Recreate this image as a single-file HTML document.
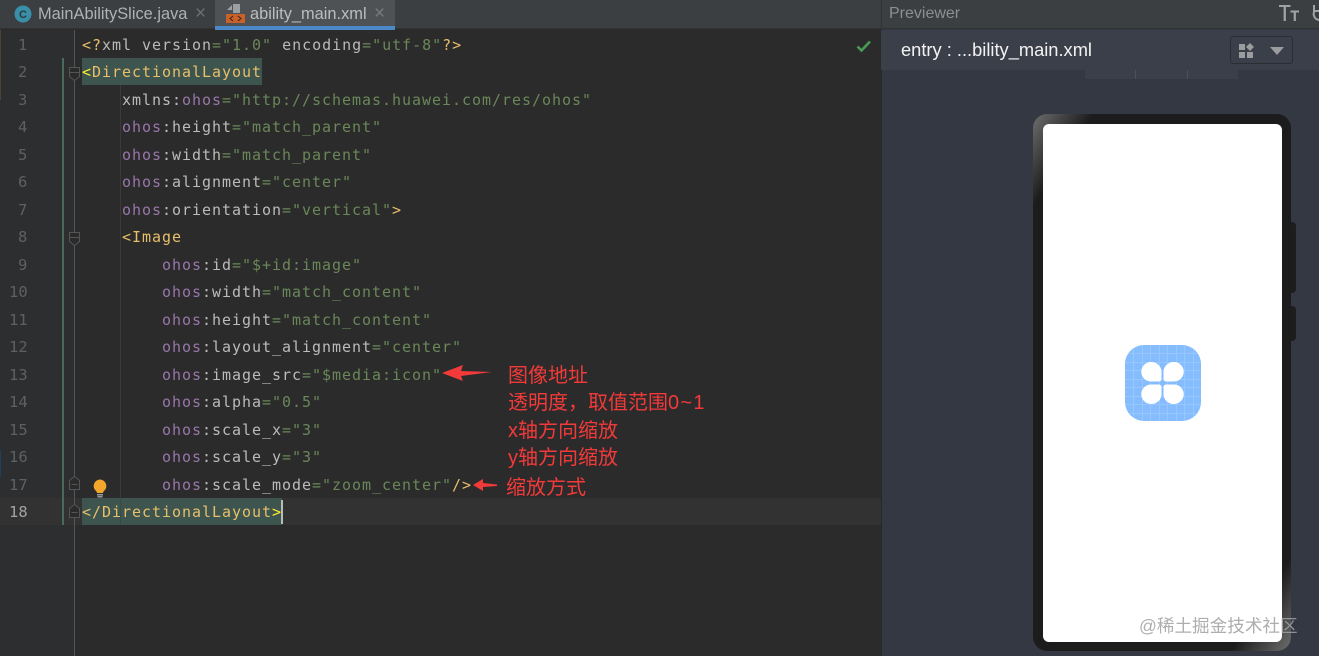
<!DOCTYPE html>
<html><head><meta charset="utf-8">
<style>
*{box-sizing:border-box}
html,body{margin:0;padding:0;width:1319px;height:656px;overflow:hidden;background:#2b2b2b}
body{position:relative;font-family:"Liberation Sans",sans-serif}
.a{position:absolute}
.ln{position:absolute;font:15.5px/27px "DejaVu Sans Mono",monospace;color:#5d6163;white-space:pre}
.c{position:absolute;margin-top:1px;font:15px/27px "DejaVu Sans Mono","Liberation Mono",monospace;letter-spacing:.97px;white-space:pre;color:#bbb}
.o{color:#9876aa}.s{color:#6a8759}.t{color:#e8bf6a}.y{color:#ffef28}.g{color:#a9b7c6}
.r{position:absolute;margin-top:2px;font:20px/27px "Liberation Sans","Noto Sans CJK SC",sans-serif;color:#f23a3a;white-space:pre}
</style></head><body>
<!-- tab bar -->
<div class="a" style="left:0;top:0;width:881px;height:29px;background:#3c3f41;border-bottom:1px solid #323232"></div>
<div class="a" style="left:215px;top:0;width:180px;height:26px;background:#4e5254"></div>
<div class="a" style="left:215px;top:26px;width:180px;height:4px;background:#4a88c7"></div>
<svg class="a" style="left:14px;top:5px" width="18" height="18"><circle cx="9" cy="9" r="8.5" fill="#3a8fa8"/><text x="9" y="13" text-anchor="middle" font-family="Liberation Sans" font-weight="bold" font-size="11" fill="#2b3a40">C</text></svg>
<div class="a" style="left:38px;top:3px;font-size:16.4px;line-height:22px;color:#afb1b3;white-space:pre">MainAbilitySlice.java</div>
<div class="a" style="left:195px;top:3px;font-size:19px;line-height:22px;color:#6d7072">×</div>
<svg class="a" style="left:226px;top:3px" width="20" height="21"><path d="M7 1h7v9H7z" fill="#9da0a2"/><path d="M1 7l5-5v5z" fill="#9da0a2"/><rect x="0" y="11" width="19" height="9" fill="#c9602a"/><path d="M7 13l-3 2.5 3 2.5M12 13l3 2.5-3 2.5" stroke="#3b2416" stroke-width="1" fill="none"/></svg>
<div class="a" style="left:250px;top:3px;font-size:16.4px;line-height:22px;color:#bbbdbf;white-space:pre">ability_main.xml</div>
<div class="a" style="left:374px;top:3px;font-size:19px;line-height:22px;color:#787b7d">×</div>

<!-- gutter -->
<div class="a" style="left:0;top:30px;width:75px;height:626px;background:#2d2e2f"></div>
<div class="a" style="left:0;top:498px;width:75px;height:27px;background:#323232"></div>
<div class="a" style="left:74px;top:30px;width:1px;height:626px;background:#555"></div>
<div class="a" style="left:62px;top:58px;width:2px;height:467px;background:#4a6a5c"></div>
<div class="a" style="left:0;top:30px;width:1px;height:70px;background:#4a4336"></div>
<div class="a" style="left:0;top:450px;width:1px;height:27px;background:#1f3f5f"></div>
<div class="a" style="left:75px;top:498px;width:806px;height:27px;background:#323232"></div>
<div class="a" style="left:120px;top:85px;width:1px;height:413px;background:#3a3a3a"></div>

<div class="ln" style="top:32px;left:18px">1</div>
<div class="ln" style="top:59px;left:18px">2</div>
<div class="ln" style="top:87px;left:18px">3</div>
<div class="ln" style="top:114px;left:18px">4</div>
<div class="ln" style="top:142px;left:18px">5</div>
<div class="ln" style="top:169px;left:18px">6</div>
<div class="ln" style="top:197px;left:18px">7</div>
<div class="ln" style="top:224px;left:18px">8</div>
<div class="ln" style="top:252px;left:18px">9</div>
<div class="ln" style="top:279px;left:9px">10</div>
<div class="ln" style="top:307px;left:9px">11</div>
<div class="ln" style="top:334px;left:9px">12</div>
<div class="ln" style="top:362px;left:9px">13</div>
<div class="ln" style="top:389px;left:9px">14</div>
<div class="ln" style="top:417px;left:9px">15</div>
<div class="ln" style="top:444px;left:9px">16</div>
<div class="ln" style="top:472px;left:9px">17</div>
<div class="ln" style="top:499px;left:9px;color:#a4a3a3">18</div>

<!-- highlights -->
<div class="a" style="left:82px;top:58px;width:180px;height:27px;background:#3d544f"></div>
<div class="a" style="left:82px;top:498px;width:200px;height:27px;background:#3d544f"></div>
<div class="a" style="left:120px;top:498px;width:1px;height:27px;background:#3a4a46"></div>

<!-- fold markers -->
<svg class="a" style="left:68px;top:66px" width="14" height="16"><path d="M1.500 1.500h10v9l-5 4-5-4z" fill="#2b2b2b" stroke="#555"/><path d="M1.500 6.500h10" stroke="#555"/></svg>
<svg class="a" style="left:68px;top:231px" width="14" height="16"><path d="M1.500 1.500h10v9l-5 4-5-4z" fill="#2b2b2b" stroke="#555"/><path d="M1.500 6.500h10" stroke="#555"/></svg>
<svg class="a" style="left:68px;top:475px" width="14" height="16"><path d="M1.500 14.500h10v-9l-5-4-5 4z" fill="#2b2b2b" stroke="#555"/><path d="M3.500 9.500h6" stroke="#555"/></svg>
<svg class="a" style="left:68px;top:503px" width="14" height="16"><path d="M1.500 14.500h10v-9l-5-4-5 4z" fill="#2b2b2b" stroke="#555"/><path d="M3.500 9.500h6" stroke="#555"/></svg>
<svg class="a" style="left:92px;top:479px" width="16" height="19"><path d="M8 0.500a6.500 6.500 0 0 1 4 11.500c-.8.700-1 1.500-1 2H5c0-.5-.2-1.300-1-2A6.500 6.500 0 0 1 8 .5z" fill="#f2a62b"/><rect x="5" y="15" width="6" height="1.500" fill="#9a9a9a"/><rect x="5.500" y="17" width="5" height="1.500" fill="#9a9a9a"/></svg>

<!-- code -->
<div class="c" style="left:82px;top:31px"><span class="t">&lt;?</span><span style="color:#bababa">xml version</span><span class="s">="1.0"</span> <span style="color:#bababa">encoding</span><span class="s">="utf-8"</span><span class="t">?&gt;</span></div>
<div class="c t" style="left:82px;top:58px"><span class="y">&lt;</span>DirectionalLayout</div>
<div class="c" style="left:122px;top:86px">xmlns:<span class="o">ohos</span><span class="s">="http://schemas.huawei.com/res/ohos"</span></div>
<div class="c" style="left:122px;top:113px"><span class="o">ohos</span>:height<span class="s">="match_parent"</span></div>
<div class="c" style="left:122px;top:141px"><span class="o">ohos</span>:width<span class="s">="match_parent"</span></div>
<div class="c" style="left:122px;top:168px"><span class="o">ohos</span>:alignment<span class="s">="center"</span></div>
<div class="c" style="left:122px;top:196px"><span class="o">ohos</span>:orientation<span class="s">="vertical"</span><span class="t">&gt;</span></div>
<div class="c t" style="left:122px;top:223px">&lt;Image</div>
<div class="c" style="left:162px;top:251px"><span class="o">ohos</span>:id<span class="s">="$+id:image"</span></div>
<div class="c" style="left:162px;top:278px"><span class="o">ohos</span>:width<span class="s">="match_content"</span></div>
<div class="c" style="left:162px;top:306px"><span class="o">ohos</span>:height<span class="s">="match_content"</span></div>
<div class="c" style="left:162px;top:333px"><span class="o">ohos</span>:layout_alignment<span class="s">="center"</span></div>
<div class="c" style="left:162px;top:361px"><span class="o">ohos</span>:image_src<span class="s">="$media:icon"</span></div>
<div class="c" style="left:162px;top:388px"><span class="o">ohos</span>:alpha<span class="s">="0.5"</span></div>
<div class="c" style="left:162px;top:416px"><span class="o">ohos</span>:scale_x<span class="s">="3"</span></div>
<div class="c" style="left:162px;top:443px"><span class="o">ohos</span>:scale_y<span class="s">="3"</span></div>
<div class="c" style="left:162px;top:471px"><span class="o">ohos</span>:scale_mode<span class="s">="zoom_center"</span><span class="t">/&gt;</span></div>
<div class="c t" style="left:82px;top:498px">&lt;/DirectionalLayout<span class="y">&gt;</span></div>
<div class="a" style="left:281px;top:500px;width:2px;height:24px;background:#bbb"></div>

<!-- check -->
<svg class="a" style="left:856px;top:40px" width="16" height="13"><path d="M1.500 6.500l4 4 8.500-9" fill="none" stroke="#499c54" stroke-width="2.600"/></svg>

<!-- annotations -->
<svg class="a" style="left:441px;top:362px" width="52" height="20"><path d="M1 11L22 3l-2 6 31 1-31 4 2 5z" fill="#f23a3a"/></svg>
<svg class="a" style="left:472px;top:477px" width="26" height="16"><path d="M1 8L11 2v4l14 1.500V9l-14 1v4z" fill="#f23a3a"/></svg>
<div class="r" style="left:508px;top:361px">图像地址</div>
<div class="r" style="left:508px;top:388px">透明度，取值范围<span style="letter-spacing:1.300px">0~1</span></div>
<div class="r" style="left:508px;top:416px">x轴方向缩放</div>
<div class="r" style="left:508px;top:443px">y轴方向缩放</div>
<div class="r" style="left:506px;top:473px">缩放方式</div>

<!-- previewer -->
<div class="a" style="left:881px;top:0;width:438px;height:656px;background:#333842;border-left:1px solid #26282a"></div>
<div class="a" style="left:881px;top:0;width:438px;height:29px;background:#3c3f41;border-left:1px solid #323232;border-bottom:1px solid #303234"></div>
<div class="a" style="left:881px;top:30px;width:438px;height:40px;background:#3b3f4a"></div>
<div class="a" style="left:889px;top:3px;font-size:16px;line-height:21px;color:#8d9092">Previewer</div>
<div class="a" style="left:901px;top:38px;font-size:18.300px;line-height:24px;color:#f2f2f2;white-space:pre">entry : ...bility_main.xml</div>
<svg class="a" style="left:1279px;top:4px" width="40" height="18"><path d="M0 1h11.500v2H6.900v14H4.600V3H0zM11.500 6.500H20v2h-3.100V17h-2.200V8.500h-3.200z" fill="#a0a2a4"/><path d="M35 1v6h5" fill="none" stroke="#a0a2a4" stroke-width="2"/><path d="M35.500 7a6 6 0 0 0 4.500 9" fill="none" stroke="#a0a2a4" stroke-width="2"/></svg>
<div class="a" style="left:1230px;top:36px;width:63px;height:28px;border:1px solid #2a2d33;border-radius:3px"></div>
<svg class="a" style="left:1239px;top:43px" width="46" height="16"><rect x="0" y="1" width="6" height="6" fill="#9a9c9e"/><path d="M11 0l4 4-4 4-4-4z" fill="#9a9c9e"/><rect x="0" y="9" width="6" height="6" fill="#9a9c9e"/><rect x="8" y="9" width="6" height="6" fill="#9a9c9e"/><path d="M31 4h14l-7 8z" fill="#9a9c9e"/></svg>
<div class="a" style="left:1085px;top:70px;width:153px;height:9px;background:#3b3f4a"></div>
<div class="a" style="left:1135px;top:70px;width:1px;height:9px;background:#4c505a"></div>
<div class="a" style="left:1187px;top:70px;width:1px;height:9px;background:#4c505a"></div>

<!-- phone -->
<div class="a" style="left:1291px;top:222px;width:5px;height:71px;background:#1d1d1f;border-radius:0 4px 4px 0"></div>
<div class="a" style="left:1291px;top:306px;width:5px;height:35px;background:#1d1d1f;border-radius:0 4px 4px 0"></div>
<div class="a" style="left:1033px;top:114px;width:258px;height:537px;border-radius:14px;background:linear-gradient(123deg,#6e6e6e 0,#555 3%,#1c1c1c 10%,#1c1c1c 90%,#555 97%,#6e6e6e 100%)"></div>
<div class="a" style="left:1043px;top:124px;width:239px;height:518px;background:#fff;border-radius:6px"></div>
<svg class="a" style="left:1125px;top:345px" width="76" height="76" viewBox="0 0 76 76">
<defs><clipPath id="q"><rect width="76" height="76" rx="19"/></clipPath></defs>
<rect width="76" height="76" rx="19" fill="#84bcfd"/>
<g clip-path="url(#q)" stroke="#97c7fd" stroke-width="1"><path d="M0 8.500h76M0 17.500h76M0 25.500h76M0 34.500h76M0 42.500h76M0 51.500h76M0 59.500h76M0 68.500h76M8.500 0v76M17.500 0v76M25.500 0v76M34.500 0v76M42.500 0v76M51.500 0v76M59.500 0v76M68.500 0v76"/></g>
<g fill="#fff">
<path d="M26 17a10 10 0 0 1 10.500 10v7a2.500 2.500 0 0 1-2.500 2.500H26a9.750 9.750 0 0 1 0-19.500z"/>
<path d="M26 17a10 10 0 0 1 10.500 10v7a2.500 2.500 0 0 1-2.500 2.500H26a9.750 9.750 0 0 1 0-19.500z" transform="translate(75 0) scale(-1 1)"/>
<path d="M26 17a10 10 0 0 1 10.500 10v7a2.500 2.500 0 0 1-2.500 2.500H26a9.750 9.750 0 0 1 0-19.500z" transform="translate(0 76) scale(1 -1)"/>
<path d="M26 17a10 10 0 0 1 10.500 10v7a2.500 2.500 0 0 1-2.500 2.500H26a9.750 9.750 0 0 1 0-19.500z" transform="translate(75 76) scale(-1 -1)"/>
</g>
</svg>
<div class="a" style="left:1139px;top:614px;font:17.600px/24px 'Liberation Sans','Noto Sans CJK SC',sans-serif;color:rgba(160,160,160,.85);white-space:pre">@稀土掘金技术社区</div>
</body></html>
